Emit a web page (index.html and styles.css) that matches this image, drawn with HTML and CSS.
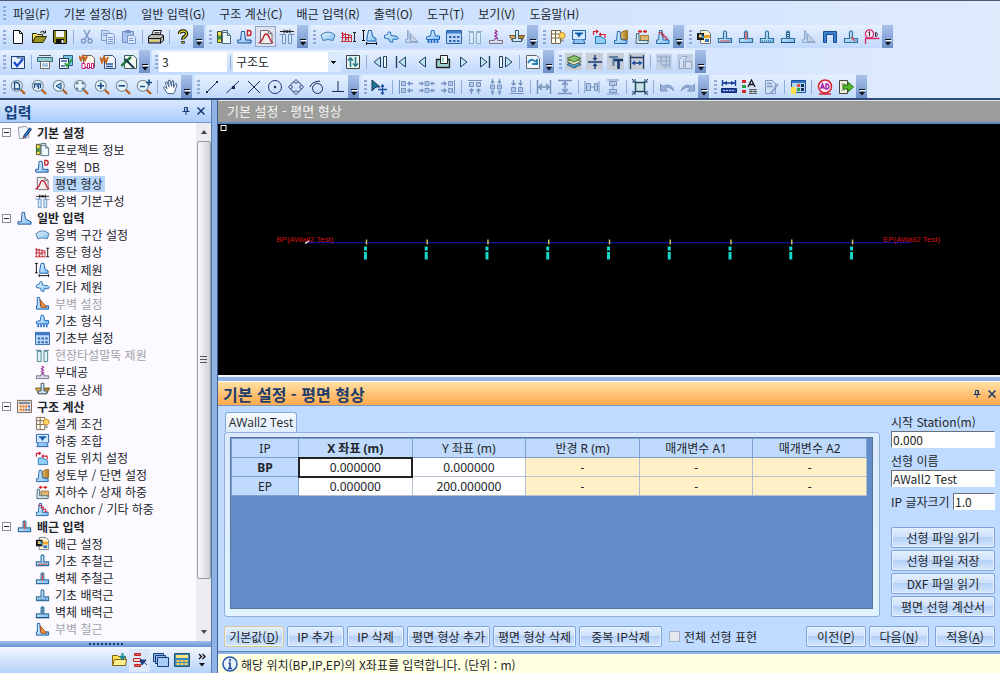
FILE: index.html
```html
<!DOCTYPE html>
<html lang="ko">
<head>
<meta charset="utf-8">
<title>기본 설정 - 평면 형상</title>
<link rel="stylesheet" href="styles.css">
</head>
<body>
<svg class="sprite" aria-hidden="true">
<defs>
<linearGradient id="gw" x1="0" y1="0" x2="1" y2="1"><stop offset="0" stop-color="#e6f6ff"/><stop offset="1" stop-color="#7fbdf0"/></linearGradient>
<linearGradient id="gs" x1="0" y1="0" x2="1" y2="0"><stop offset="0" stop-color="#e8c070"/><stop offset="1" stop-color="#a87820"/></linearGradient>
</defs>
<symbol id="new" viewBox="0 0 16 16"><path d="M3.500 1.500h6l3 3v10h-9z" fill="#fff" stroke="#111"/><path d="M9.500 1.500v3h3" fill="none" stroke="#111"/></symbol>
<symbol id="open" viewBox="0 0 16 16"><path d="M1.500 13.500v-9h4l1 1h5v2" fill="#ffe45c" stroke="#2b2a08"/><path d="M1.500 13.500l3-6h11l-3.500 6z" fill="#9a9420" stroke="#2b2a08"/><path d="M9 3.500q3-3 5 0M14.500 1.500v2.500h-3" fill="none" stroke="#222"/></symbol>
<symbol id="save" viewBox="0 0 16 16"><path d="M1.500 1.500h13v13h-12l-1-1z" fill="#8a8a20" stroke="#111"/><path d="M4 2h8v6H4z" fill="#f2f4f8"/><path d="M4 10h8v4.500H4z" fill="#111"/><path d="M9.500 11h2v3h-2z" fill="#fff"/></symbol>
<symbol id="cut" viewBox="0 0 16 16"><path d="M5 1l5 9M11 1l-5 9" stroke="#7d96c4" stroke-width="1.500"/><circle cx="4.500" cy="12" r="2" fill="none" stroke="#7d96c4" stroke-width="1.400"/><circle cx="11" cy="12" r="2" fill="none" stroke="#7d96c4" stroke-width="1.400"/></symbol>
<symbol id="copy" viewBox="0 0 16 16"><path d="M1.500 1.500h6l2 2v8h-8z" fill="#cfdff8" stroke="#7c9bd0"/><path d="M6.500 4.500h6l2 2v8h-8z" fill="#dce9fc" stroke="#7c9bd0"/><path d="M3 4.500h3M3 6.500h3M8 8.500h5M8 10.500h5M8 12.500h5" stroke="#7c9bd0"/></symbol>
<symbol id="paste" viewBox="0 0 16 16"><path d="M1.500 2.500h11v11h-11z" fill="#a9c2ea" stroke="#7391c8"/><path d="M4.500 1h5v3h-5z" fill="#7391c8"/><path d="M6.500 6.500h6l2 2v6h-8z" fill="#dce9fc" stroke="#7c9bd0"/><path d="M8 9.500h4M8 11.500h5" stroke="#7c9bd0"/></symbol>
<symbol id="print" viewBox="0 0 16 16"><path d="M5.500 1.500h8l-2 5h-8z" fill="#fff" stroke="#111"/><path d="M6.500 3.500h5M6 5h5" stroke="#555"/><path d="M.500 7.500l3-2h10l2 1v5l-3 2.500h-12z" fill="#b9b9b0" stroke="#111"/><path d="M.500 9.500h12v5M12.500 9.500l3-2.500" fill="none" stroke="#111"/><path d="M2 11.500h9" stroke="#e8d840"/></symbol>
<symbol id="help" viewBox="0 0 16 16"><path d="M4.500 5q0-3 3.500-3t3.500 3q0 1.500-2 2.800T8 10.500M8 12v2.500" fill="none" stroke="#111" stroke-width="3.400"/><path d="M4.500 5q0-3 3.500-3t3.500 3q0 1.500-2 2.800T8 10M8 12.500v1.500" fill="none" stroke="#d8cc20" stroke-width="1.400"/></symbol>
<symbol id="info" viewBox="0 0 16 16"><path d="M6.500 3.500h5l3 3v8h-8z" fill="#eef7fb" stroke="#506f80"/><path d="M11.500 3.500v3h3M6.500 3.500v-2h5v2" fill="none" stroke="#506f80"/><path d="M1.500 2.500h4v11h-4z" fill="#f2df50" stroke="#3e4a33"/><path d="M2 6.500h3v4H2z" fill="#3f9442"/></symbol>
<symbol id="db" viewBox="0 0 16 16"><path d="M4.500 2.500h3l1 8.500h5.500v3H.800v-3h2.700z" fill="url(#gw)" stroke="#1a539b"/><path d="M10.500 1.500h1.500q2 0 2 2.500t-2 2.500h-1.500z" fill="#fff" stroke="#c41c28" stroke-width="1.400"/></symbol>
<symbol id="foot" viewBox="0 0 16 16"><path d="M5.500 1.500h2.500l1 7 6 3v2.500H1v-2.500h3.500z" fill="url(#gw)" stroke="#1a539b"/></symbol>
<symbol id="plan" viewBox="0 0 16 16"><path d="M2.500 1.500h8l3.500 3v10H2.500z" fill="#f2efef" stroke="#6e6c74"/><path d="M10.500 1.500v3h3.500" fill="none" stroke="#6e6c74"/><path d="M.500 14q3-1 4.500-5t3-4q2 0 3.500 4t3.500 5" fill="none" stroke="#c01d30" stroke-width="1.300"/></symbol>
<symbol id="comp" viewBox="0 0 16 16"><path d="M3.500 5.500h3v9h-3zM9.500 5.500h3v9h-3z" fill="#d6e9fb" stroke="#6b93bf"/><path d="M.500 5.500h5M10.500 5.500h5" stroke="#6b93bf"/><path d="M1 2.500h14M5 .500v4M11 .500v4" stroke="#222"/><path d="M5 2.500l3-1.500v3zM11 2.500L8 1v3z" fill="#222"/></symbol>
<symbol id="fan" viewBox="0 0 16 16"><path d="M1 6q7-6 14 0l-2 5.500q-5-2-10 0z" fill="url(#gw)" stroke="#477bab"/></symbol>
<symbol id="prof" viewBox="0 0 16 16"><path d="M0 4.500l11 2M0 8.500h11M0 12.500h11M1.500 3v10M4.500 4v9M7.500 5v8M10.500 6v7M1 8l3-3M4 12l4-5" fill="none" stroke="#c5303a"/><path d="M13.500 3v10M12 3.500h3M12 12.500h3" stroke="#222"/></symbol>
<symbol id="sect" viewBox="0 0 16 16"><path d="M6.500 1.500h3l1 6 3.500 2v2.500h-9V9z" fill="url(#gw)" stroke="#1a5fb0"/><path d="M1.500 1v11M0 1.500h3M0 11.500h3M4 14.500h11M4.500 13v3M14.500 13v3" stroke="#111"/></symbol>
<symbol id="etc" viewBox="0 0 16 16"><path d="M1.500 6.500l3-1 1-2.500h2l.500 3.500 5 .500 2.500 2-1.500 1.500-4-.500-.500 3.500-3-1-.500-2.500-4.500-1z" fill="url(#gw)" stroke="#2a72b8"/></symbol>
<symbol id="butt" viewBox="0 0 16 16"><path d="M2.500 1.500h2.500l1 9h8.500v3.500h-13v-3.500h1z" fill="url(#gw)" stroke="#1a5fb0"/><path d="M5.500 4l7 8h-6z" fill="#f29b38" stroke="#9b4920"/></symbol>
<symbol id="buttg" viewBox="0 0 16 16"><path d="M3.500 1.500l1.500 1v7l9.500 4h-13v-3h2z" fill="#c3d6ef" stroke="#8fa8cc"/><path d="M6.500 4.500l7 8h-7z" fill="#c8d2de" stroke="#8fa8cc"/></symbol>
<symbol id="fdn" viewBox="0 0 16 16"><path d="M6.500 1.500h2.500l1.500 5.500h4v3.500H1.500V8l4-1z" fill="url(#gw)" stroke="#1a68c0"/><path d="M3.500 11v3M6.500 11v3M9.500 11v3M12.500 11v3" stroke="#1568c8" stroke-width="1.700"/></symbol>
<symbol id="fset" viewBox="0 0 16 16"><path d="M.500 1.500h15v13H.500z" fill="#bcd7fb" stroke="#2f67ac"/><path d="M1 2h14v2.500H1z" fill="#3c7cc9"/><path d="M3 8h2.500M7 8h2.500M11 8h2.500M3 12h2.500M7 12h2.500M11 12h2.500" stroke="#2f67ac" stroke-width="2"/></symbol>
<symbol id="pile" viewBox="0 0 16 16"><path d="M2.500 3.500h4v11h-4zM9.500 3.500h4v11h-4zM1 2.500h5.500v2M15 2.500H9.500" fill="#e2f3f8" stroke="#44808e"/></symbol>
<symbol id="acc" viewBox="0 0 16 16"><path d="M1.500 11.500h5v-2h3v2h5v3h-13z" fill="#dcd9e8" stroke="#797290"/><path d="M7 1l2 1.500-2 1.500 2 1.500-2 1.500 2 1.500-2 1.500" fill="none" stroke="#9c2f96" stroke-width="1.300"/></symbol>
<symbol id="soil" viewBox="0 0 16 16"><path d="M.500 6.500h15l-3 6h-9z" fill="url(#gs)" stroke="#76541a"/><path d="M6.500 1.500h3v8h3v3h-9v-3h3z" fill="#cde7f9" stroke="#3f5a70"/></symbol>
<symbol id="cond" viewBox="0 0 16 16"><path d="M1.500 1.500h9v13h-9zM1.500 5h9M1.500 9h9M5.500 1.500v13" fill="#fffaf0" stroke="#79654c"/><circle cx="12" cy="6.500" r="3" fill="#ffd964" stroke="#c38a1c"/><path d="M11 10.500h2.500v2H11z" fill="#8a8a8a"/></symbol>
<symbol id="load" viewBox="0 0 16 16"><path d="M1.500 1.500h13v9h-13z" fill="#d2e9ff" stroke="#285ea5"/><path d="M4 3.500h8V5h-1.500L8 8.500 5.500 5H4z" fill="#1459ad"/><path d="M3.500 10.500l-1.500 4h12l-1.500-4" fill="#8dc4f4" stroke="#285ea5"/></symbol>
<symbol id="chk" viewBox="0 0 16 16"><path d="M3.500 14.500v-7h5l5 3v4z" fill="#8fd0f4" stroke="#2d79b4"/><path d="M1.500 6V2.500h4M4 1l2 1.500L4 4M7.500 5.500h5.500V9M9 4L7.500 5.500 9 7" fill="none" stroke="#d3213b" stroke-width="1.200"/></symbol>
<symbol id="fill" viewBox="0 0 16 16"><path d="M14.500 1.500v9H8l-1-3q0-6 7.500-6z" fill="url(#gs)" stroke="#9b7020"/><path d="M4.500 2.500h2.500l1 8 6 1v3H1.500v-3h2z" fill="url(#gw)" stroke="#2268ac"/></symbol>
<symbol id="water" viewBox="0 0 16 16"><path d="M6.500 6.500h8v6h-8z" fill="#dcb66a" stroke="#9d7836"/><path d="M2.500 4.500h2.500v7h9v3h-12z" fill="#d9e7ec" stroke="#47697a"/><path d="M4 2.500h4M9 2.500h4M6 1v3M11 1v3" stroke="#d42020" stroke-width="1.300"/></symbol>
<symbol id="anch" viewBox="0 0 16 16"><path d="M4.500 1.500h2.500l1 9.500h6v3.500H1.500V11h2z" fill="url(#gw)" stroke="#2268ac"/><path d="M4 3l8 8M6 3l7 7" stroke="#c31d37" stroke-width="1.300" stroke-dasharray="2 1"/></symbol>
<symbol id="rset" viewBox="0 0 16 16"><path d="M4.500 1.500h7l3 3v10h-10z" fill="#fff3cf" stroke="#6c7c94"/><path d="M6 6h8v3H6z" fill="#f0a62c"/><path d="M1 4h7v7H1z" fill="#19191c"/><path d="M3 5.500h3v3H3z" fill="#f4d078"/><path d="M5 6l3 3" stroke="#48b7ef" stroke-width="1.500"/><path d="M9 10h4v3H9z" fill="#2e78c3"/></symbol>
<symbol id="wall" viewBox="0 0 16 16"><path d="M6.500 9.500V3q1.500-2 3 0v6.500h5v4h-13v-4z" fill="url(#gw)" stroke="#35729f" stroke-width="1.200"/></symbol>
<symbol id="w1" viewBox="0 0 16 16"><use href="#wall"/><path d="M3 12h10" stroke="#dd4a4a"/></symbol>
<symbol id="w2" viewBox="0 0 16 16"><use href="#wall"/><path d="M8 3v8" stroke="#dd4a4a" stroke-width="1.300"/></symbol>
<symbol id="w3" viewBox="0 0 16 16"><use href="#wall"/><path d="M3 12h10" stroke="#174c80" stroke-dasharray="1 1"/></symbol>
<symbol id="w4" viewBox="0 0 16 16"><use href="#wall"/><path d="M8 3v7" stroke="#0f3863" stroke-width="1.500" stroke-dasharray="1 1"/><path d="M1 13.500h14" stroke="#174c80"/></symbol>
<symbol id="w5" viewBox="0 0 16 16"><use href="#wall"/><path d="M8 8l4 4" stroke="#dd4a4a" stroke-width="1.500"/></symbol>
<symbol id="bstop" viewBox="0 0 16 16"><path d="M1.500 13.500h3v-8h7v8h3v-11h-13z" fill="#3d7fc4" stroke="#164f94"/></symbol>
<symbol id="oned" viewBox="0 0 16 16"><circle cx="5.500" cy="5" r="4.200" fill="#fbe3f0" stroke="#d8286c" stroke-width="1.200"/><path d="M4.500 3.500l1-1v5M11.500 3.500v4h1q2-2 0-4z" fill="none" stroke="#333"/><path d="M1.500 15V9.500h14" fill="none" stroke="#d8286c" stroke-width="1.300"/></symbol>
<symbol id="note" viewBox="0 0 16 16"><path d="M1.500 2.500l8-1 3 3v9l-10 1z" fill="#f4f8ff" stroke="#8590a8"/><path d="M13.500 3l2 1.500-6 8-3 1.500 1-3z" fill="#2f77c8" stroke="#183765"/><path d="M6 14l1-2 1.500 1z" fill="#cc4322"/></symbol>
<symbol id="calc" viewBox="0 0 16 16"><path d="M.500 1.500h15v13H.500z" fill="#f7e5cf" stroke="#72645b"/><path d="M2 3h12v2.500H2z" fill="#7c8aa0"/><path d="M3 8h2M6 8h2M9 8h2M3 11.500h2M6 11.500h2" stroke="#df6d22" stroke-width="2"/><path d="M12 8h2M9 11.500h2M12 11.500h2" stroke="#2f6ec5" stroke-width="2"/></symbol>
<symbol id="check" viewBox="0 0 16 16"><path d="M1.500 2.500h13v12h-13z" fill="#e8f1ff" stroke="#1f3d79"/><path d="M1.500 2.500h5l1 1.500h7" fill="none" stroke="#1f3d79"/><path d="M4 8l3 4 6-7" fill="none" stroke="#144bd0" stroke-width="2.200"/></symbol>
<symbol id="plot" viewBox="0 0 16 16"><path d="M.500 3.500h15v4H.500z" fill="#8fd0d8" stroke="#336670"/><path d="M3.500 7.500h9v7h-9z" fill="#fff" stroke="#666"/><path d="M5 10h6M5 12h6" stroke="#4b91ca"/><path d="M2 1.500h12" stroke="#555"/></symbol>
<symbol id="rep" viewBox="0 0 16 16"><path d="M5.500 1.500h9v10h-9z" fill="#79c8e8" stroke="#2f6080"/><path d="M1.500 4.500h9v10h-9z" fill="#f5fbff" stroke="#335"/><path d="M3 7h6M3 12h4" stroke="#2b60b0" stroke-width="1.500"/><path d="M7 9l2 3 5-7" fill="none" stroke="#2b9b3c" stroke-width="2"/></symbol>
<symbol id="wrd" viewBox="0 0 16 16"><path d="M4.500 1.500h8l3 3v10h-11z" fill="#f2f6ff" stroke="#3d4e78"/><path d="M0 3l2 5 2-5 2 5 2-5" fill="none" stroke="#c4641c" stroke-width="2"/><path d="M6 10h7M6 12.500h7" stroke="#2b56a0" stroke-width="1.500"/></symbol>
<symbol id="xls" viewBox="0 0 16 16"><path d="M3.500 1.500h9l3 3v10h-12z" fill="#f6fcf4" stroke="#3a5a4c"/><path d="M0 12l10-9" stroke="#1f7a3a" stroke-width="2.400"/><path d="M4 5l9 9" stroke="#1b3a50" stroke-width="2"/></symbol>
<symbol id="mag" viewBox="0 0 16 16"><path d="M10.500 10.500l4.500 4.500" stroke="#b5662b" stroke-width="2.400"/><circle cx="6.800" cy="6.800" r="5.500" fill="#e5f4fa" stroke="#7d909c" stroke-width="1.200"/></symbol>
<symbol id="z1" viewBox="0 0 16 16"><use href="#mag"/><path d="M4.500 3.500h3l2 2v4.500h-5z" fill="none" stroke="#174a86" stroke-width="1.300"/></symbol>
<symbol id="z2" viewBox="0 0 16 16"><use href="#mag"/><path d="M3.500 9V5h6v4M5.500 7h2v3" fill="none" stroke="#174a86" stroke-width="1.300"/></symbol>
<symbol id="z3" viewBox="0 0 16 16"><use href="#mag"/><path d="M9 4v6L4 7z" fill="#8fc1d8" stroke="#174a86"/></symbol>
<symbol id="z4" viewBox="0 0 16 16"><use href="#mag"/><path d="M4 5.500V4h1.500M8.500 4H10v1.500M4 8.500V10h1.500M8.500 10H10V8.500" fill="none" stroke="#174a86" stroke-width="1.200"/></symbol>
<symbol id="z5" viewBox="0 0 16 16"><use href="#mag"/><path d="M3.500 6.800h6.600M6.800 3.500v6.600" stroke="#174a86" stroke-width="1.600"/></symbol>
<symbol id="z6" viewBox="0 0 16 16"><use href="#mag"/><path d="M3.500 6.800h6.600" stroke="#174a86" stroke-width="1.600"/></symbol>
<symbol id="z7" viewBox="0 0 16 16"><use href="#mag"/><path d="M4 7.500h5M10 3.500h6M13 .500v6" stroke="#174a86" stroke-width="1.600"/></symbol>
<symbol id="hand" viewBox="0 0 16 16"><path d="M4.500 14.500l-4-6 1.500-.700 2 2-1.500-6.500 1.500-.500 2 5-.500-6.500h1.500l1.500 6 .500-5.500 1.500.200v6.500l2-4 1.500.700-2 7-1.500 2.500z" fill="#fff" stroke="#44668c"/></symbol>
<symbol id="l1" viewBox="0 0 16 16"><path d="M3 13L13 3" stroke="#182a55"/><path d="M2 12h2v2H2zM12 2h2v2h-2z" fill="#182a55"/></symbol>
<symbol id="l2" viewBox="0 0 16 16"><path d="M1.500 14L14 2" stroke="#182a55"/><path d="M7 7h3v3H7z" fill="#182a55"/></symbol>
<symbol id="l3" viewBox="0 0 16 16"><path d="M2 14L14 2M2 2l12 12" stroke="#182a55"/></symbol>
<symbol id="l4" viewBox="0 0 16 16"><circle cx="8" cy="8" r="6.500" fill="none" stroke="#1d3878"/><circle cx="8" cy="8" r="1.200" fill="#182a55"/></symbol>
<symbol id="l5" viewBox="0 0 16 16"><circle cx="8" cy="8" r="5.500" fill="none" stroke="#1d3878"/><path d="M8 .500L10 2.500 8 4.500 6 2.500zM8 11.500l2 2-2 2-2-2zM2.500 6l2 2-2 2-2-2zM13.500 6l2 2-2 2-2-2z" fill="#dcebff" stroke="#1d3878"/></symbol>
<symbol id="l6" viewBox="0 0 16 16"><circle cx="8.500" cy="9.500" r="5" fill="none" stroke="#182a55"/><path d="M1 8q1-5 10-6" fill="none" stroke="#182a55"/></symbol>
<symbol id="l7" viewBox="0 0 16 16"><path d="M8 2v10M2 12.500h12" stroke="#182a55"/></symbol>
<symbol id="fit" viewBox="0 0 16 16"><path d="M1.500 1.500h13v13h-13z" fill="#e6f5f2" stroke="#444"/><path d="M5.500 13V4M3 6.500L5.500 4 8 6.500M10.500 3v9M8 9.500l2.500 2.500L13 9.500" fill="none" stroke="#287c86" stroke-width="1.600"/></symbol>
<symbol id="p1" viewBox="0 0 16 16"><path d="M8.500 3v10L2 8z" fill="#bde4f2" stroke="#203f5c"/><path d="M11.500 2.500h3v11h-3z" fill="#eefaff" stroke="#203f5c"/></symbol>
<symbol id="p2" viewBox="0 0 16 16"><path d="M12.500 3v10L6 8z" fill="#bde4f2" stroke="#203f5c"/><path d="M3.500 2v12" stroke="#203f5c" stroke-width="1.400"/></symbol>
<symbol id="p3" viewBox="0 0 16 16"><path d="M11.500 3v10L5 8z" fill="#bde4f2" stroke="#203f5c"/></symbol>
<symbol id="p4" viewBox="0 0 16 16"><path d="M1.500 5.500h13v8h-13z" fill="#9ed2cf" stroke="#222" stroke-width="1.300"/><path d="M5.500 1.500h7v8h-7z" fill="#fff" stroke="#222"/><path d="M8 3v5" stroke="#9ed2cf" stroke-width="2"/></symbol>
<symbol id="p5" viewBox="0 0 16 16"><path d="M4.500 3v10L11 8z" fill="#bde4f2" stroke="#203f5c"/></symbol>
<symbol id="p6" viewBox="0 0 16 16"><path d="M3.500 3v10L10 8z" fill="#bde4f2" stroke="#203f5c"/><path d="M12.500 2v12" stroke="#203f5c" stroke-width="1.400"/></symbol>
<symbol id="p7" viewBox="0 0 16 16"><path d="M7.500 3v10L14 8z" fill="#bde4f2" stroke="#203f5c"/><path d="M1.500 2.500h3v11h-3z" fill="#eefaff" stroke="#203f5c"/></symbol>
<symbol id="redo2" viewBox="0 0 16 16"><path d="M1.500 1.500h10l3 3v10h-13z" fill="#eef6fb" stroke="#666"/><path d="M3 9q3-6 8-1M12 5v5H7" fill="none" stroke="#2a85b8" stroke-width="2"/></symbol>
<symbol id="lay" viewBox="0 0 16 16"><path d="M1 10.500l7 3.500 7-3.500-3-1.500H4z" fill="#4fa0d0" stroke="#2a5a7a"/><path d="M1 7.500L8 11l7-3.500L12 6H4z" fill="#e7e8c8" stroke="#5c6c4c"/><path d="M1 4.500L8 8l7-3.500L8 1.500z" fill="#8cc46c" stroke="#3e6e34"/></symbol>
<symbol id="mid" viewBox="0 0 16 16"><path d="M1 8h14M8 1v4M8 15v-4" stroke="#1c3c78" stroke-width="1.500"/><path d="M5.500 4h5L8 7zM5.500 12h5L8 9z" fill="#1c3c78"/></symbol>
<symbol id="tt" viewBox="0 0 16 16"><path d="M1 3h9M5.500 3v9" stroke="#5c80a8" stroke-width="2.200"/><path d="M6 6h9M10.500 6v9" stroke="#173b6c" stroke-width="2.600"/></symbol>
<symbol id="dim" viewBox="0 0 16 16"><path d="M1.500 1v14M14.500 1v14M1.500 3.500h13M4 9h8" stroke="#26426c" stroke-width="1.300"/><path d="M2.500 9L6 6.500v5zM13.500 9L10 6.500v5z" fill="#1c50b0"/></symbol>
<symbol id="hatch" viewBox="0 0 16 16"><path d="M0 0h16v16H0z" fill="#c2d0e4"/><path d="M1 3h14M1 7h14M6 11h8M5 1v8l4 5M10 1v13M13.500 3v11" fill="none" stroke="#8ea6ca"/></symbol>
<symbol id="shp" viewBox="0 0 16 16"><path d="M0 0h16v16H0z" fill="#c2d0e4"/><path d="M2.500 14.500v-9l3-3h5l-4 4v8zM8.500 7.500h6v7h-6z" fill="#d6e2f4" stroke="#8ea6ca"/></symbol>
<symbol id="sel" viewBox="0 0 16 16"><path d="M1 1l8 7H5l-4 4z" fill="#167c98" stroke="#1b3450"/><path d="M11.500 6v9M7 10.500h9M10 7.500l1.500-1.500L13 7.500M10 13.500l1.500 1.500 1.500-1.500" fill="none" stroke="#1e51a3" stroke-width="1.300"/></symbol>
<symbol id="al" viewBox="0 0 16 16"><path d="M1.500 1v14" stroke="#7893bf"/><path d="M3.500 2.500h4v4h-4zM3.500 9.500h4v4h-4z" fill="#b3c8ea" stroke="#7893bf"/><path d="M15 4.500h-5M15 11.500h-5M12 2.500l-2 2 2 2M12 9.500l-2 2 2 2" fill="none" stroke="#7893bf" stroke-width="1.300"/></symbol>
<symbol id="ac" viewBox="0 0 16 16"><path d="M6 2.500h4v4H6zM6 9.500h4v4H6z" fill="#b3c8ea" stroke="#7893bf"/><path d="M0 4.500h4M16 4.500h-4M0 11.500h4M16 11.500h-4M2.500 3L4 4.500 2.500 6M13.500 3L12 4.500 13.500 6M2.500 10L4 11.500 2.500 13M13.500 10L12 11.500l1.500 1.500" fill="none" stroke="#7893bf" stroke-width="1.300"/></symbol>
<symbol id="dd" viewBox="0 0 16 16"><path d="M1.500 1v14M14.500 1v14M3 8h10M6 5L3 8l3 3M10 5l3 3-3 3" fill="none" stroke="#7893bf" stroke-width="1.500"/></symbol>
<symbol id="dc" viewBox="0 0 16 16"><path d="M2.500 4.500h4v7h-4zM10.500 4.500h3v7h-3z" fill="#b3c8ea" stroke="#7893bf"/><path d="M7 8h3M1 2v12M15 2v12" stroke="#7893bf"/></symbol>
<symbol id="grp" viewBox="0 0 16 16"><path d="M3.500 3.500h9v9h-9z" fill="#c9e4e4" stroke="#1d4d5c" stroke-width="1.500"/><path d="M0 0l3 3M16 0l-3 3M0 16l3-3M16 16l-3-3M0 3h3V0M16 3h-3V0M0 13h3v3M16 13h-3v3" fill="none" stroke="#223a60"/></symbol>
<symbol id="undo" viewBox="0 0 16 16"><path d="M1.500 5v7h7l-2.500-2.500q4-3 9 2.500Q12 3 4 7.500z" fill="#9bb3da" stroke="#7893bf"/></symbol>
<symbol id="ruler" viewBox="0 0 16 16"><path d="M1.500 1v6M14.500 1v6M2 4h12" stroke="#1c3e9b" stroke-width="1.400"/><path d="M2 4l4-2v4zM14 4l-4-2v4z" fill="#1c3e9b"/><path d="M.500 9.500h15v4H.500z" fill="#2346a0" stroke="#112c70"/><path d="M2 11.500h12" stroke="#b8ccf4" stroke-dasharray="2 1"/></symbol>
<symbol id="prop" viewBox="0 0 16 16"><path d="M0 1h4v3H0zM0 11h4v3H0z" fill="#d02c2c"/><path d="M0 6h4v3H0z" fill="#2c9c3c"/><path d="M6 8l3.500-7L13 8M7.500 5.500h4" fill="none" stroke="#111" stroke-width="1.300"/><path d="M7 10.500h8M7 12.500h8M7 14.500h8M9 10v5M13 10v5" stroke="#666"/></symbol>
<symbol id="edit" viewBox="0 0 16 16"><path d="M2.500 1.500h7l3 3v10h-10z" fill="#cfdff5" stroke="#8099c4"/><path d="M15 5l-7 9M4 4.500h5M4 7.500h6" stroke="#8099c4" stroke-width="1.600"/></symbol>
<symbol id="pal" viewBox="0 0 16 16"><path d="M1.500 1.500h14v12h-14z" fill="#b9d8f6" stroke="#1a4f97"/><path d="M2 2h13v2H2z" fill="#3474c4"/><path d="M7 5h3v3H7z" fill="#e05040"/><path d="M11 5h3v3h-3zM11 9h3v3h-3z" fill="#1a2f57"/><path d="M7 9h3v3H7z" fill="#2c9c3c"/><path d="M1 8h5v7H1z" fill="#ffdf50"/></symbol>
<symbol id="ad" viewBox="0 0 16 16"><circle cx="8" cy="7.500" r="6.500" fill="#ffe8f0" stroke="#d42033" stroke-width="1.500"/><path d="M3.500 10l2-5 2 5M4.500 8.500h2M9 5v5h1.500q3-2.500 0-5z" fill="none" stroke="#a520a8" stroke-width="1.400"/><path d="M2 15h12" stroke="#d42033" stroke-width="1.500"/></symbol>
<symbol id="exit" viewBox="0 0 16 16"><path d="M1.500 1.500h8v13h-8z" fill="#f0f5da" stroke="#444"/><path d="M3 5h4M3 11h4" stroke="#888"/><path d="M5 6h5V3l5.500 5-5.500 5v-3H5z" fill="#55b82c" stroke="#226f18"/></symbol>
<symbol id="fold" viewBox="0 0 16 16"><path d="M1.500 13.500v-10h5l1 1h7v9z" fill="#ffdf50" stroke="#80641c"/><path d="M1.500 13.500l2-6h12l-1 6z" fill="#ffef8d" stroke="#80641c"/><path d="M11.500 1v5M9 4l2.500 3L14 4" fill="none" stroke="#16889c" stroke-width="1.800"/></symbol>
<symbol id="list" viewBox="0 0 16 16"><path d="M2.500 1.500h6v2h-6zM2.500 12.500h6v2h-6z" fill="#e8605c" stroke="#b82420"/><path d="M1.500 6.500h7v3h-7z" fill="#f8d8d4" stroke="#b82420"/><path d="M15 13l-4-4M8 8h6l-4 5z" fill="#1f3e7c" stroke="#1f3e7c"/></symbol>
<symbol id="wins" viewBox="0 0 16 16"><path d="M.500 1.500h10v8H.500z" fill="#91b9ec" stroke="#173e77"/><path d="M2.500 3.500h10v8h-10z" fill="#91b9ec" stroke="#173e77"/><path d="M4.500 5.500h11v9h-11z" fill="#a9cdf6" stroke="#173e77"/></symbol>
<symbol id="cal2" viewBox="0 0 16 16"><path d="M.500 1.500h15v13H.500z" fill="#3b8bbd" stroke="#28516d"/><path d="M2 3h12v3H2z" fill="#ffe27d"/><path d="M2.500 9h11M2.500 12h11" stroke="#ffd04f" stroke-width="2" stroke-dasharray="3 1"/></symbol>
<symbol id="pin" viewBox="0 0 8 8"><path d="M2.500 4.500v-4h3v4M.500 4.500h7M4 5v3" fill="none" stroke="#173a75"/><path d="M5 1v3" stroke="#173a75"/></symbol>
<symbol id="x" viewBox="0 0 8 8"><path d="M.500.500l7 7M7.500.500l-7 7" stroke="#173a75" stroke-width="1.500"/></symbol>
<symbol id="more" viewBox="0 0 8 8"><path d="M2 2.500h6" stroke="#fff"/><path d="M1 1.500h6" stroke="#111"/><path d="M1 4h6L4 7.500z" fill="#111"/></symbol>
</svg>

<div class="app">
<nav class="menu" aria-label="메뉴">
<span class="grip"></span>
<button>파일(F)</button><button>기본 설정(B)</button><button>일반 입력(G)</button><button>구조 계산(C)</button><button>배근 입력(R)</button><button>출력(O)</button><button>도구(T)</button><button>보기(V)</button><button>도움말(H)</button>
</nav>

<div class="bars">
<div class="row">
<div class="bar"><span class="grip"></span>
<button aria-label="새 파일"><svg><use href="#new"/></svg></button><button aria-label="열기"><svg><use href="#open"/></svg></button><button aria-label="저장"><svg><use href="#save"/></svg></button><i class="sep"></i><button aria-label="잘라내기"><svg><use href="#cut"/></svg></button><button aria-label="복사"><svg><use href="#copy"/></svg></button><button aria-label="붙여넣기"><svg><use href="#paste"/></svg></button><i class="sep"></i><button aria-label="인쇄"><svg><use href="#print"/></svg></button><i class="sep"></i><button aria-label="도움말"><svg><use href="#help"/></svg></button><button class="more" aria-label="더 보기"><svg><use href="#more"/></svg></button></div>
<div class="bar"><span class="grip"></span>
<button aria-label="프로젝트 정보"><svg><use href="#info"/></svg></button><button aria-label="옹벽 DB"><svg><use href="#db"/></svg></button><button class="on" aria-label="평면 형상"><svg><use href="#plan"/></svg></button><button aria-label="옹벽 기본구성"><svg><use href="#comp"/></svg></button><button class="more" aria-label="더 보기"><svg><use href="#more"/></svg></button></div>
<div class="bar"><span class="grip"></span>
<button aria-label="옹벽 구간 설정"><svg><use href="#fan"/></svg></button><button aria-label="종단 형상"><svg><use href="#prof"/></svg></button><button aria-label="단면 제원"><svg><use href="#sect"/></svg></button><button aria-label="기타 제원"><svg><use href="#etc"/></svg></button><button aria-label="부벽 설정"><svg><use href="#buttg"/></svg></button><button aria-label="기초 형식"><svg><use href="#fdn"/></svg></button><button aria-label="기초부 설정"><svg><use href="#fset"/></svg></button><button class="off" aria-label="말뚝 제원"><svg><use href="#pile"/></svg></button><button aria-label="부대공"><svg><use href="#acc"/></svg></button><button aria-label="토공 상세"><svg><use href="#soil"/></svg></button><button class="more" aria-label="더 보기"><svg><use href="#more"/></svg></button></div>
<div class="bar"><span class="grip"></span>
<button aria-label="설계 조건"><svg><use href="#cond"/></svg></button><button aria-label="하중 조합"><svg><use href="#load"/></svg></button><button aria-label="검토 위치 설정"><svg><use href="#chk"/></svg></button><button aria-label="성토부"><svg><use href="#fill"/></svg></button><button aria-label="지하수"><svg><use href="#water"/></svg></button><button aria-label="Anchor"><svg><use href="#anch"/></svg></button><button class="more" aria-label="더 보기"><svg><use href="#more"/></svg></button></div>
<div class="bar"><span class="grip"></span>
<button aria-label="배근 설정"><svg><use href="#rset"/></svg></button><button aria-label="기초 주철근"><svg><use href="#w1"/></svg></button><button aria-label="벽체 주철근"><svg><use href="#w2"/></svg></button><button aria-label="기초 배력근"><svg><use href="#w3"/></svg></button><button aria-label="벽체 배력근"><svg><use href="#w4"/></svg></button><button aria-label="부벽 철근"><svg><use href="#buttg"/></svg></button><button aria-label="전단 철근"><svg><use href="#bstop"/></svg></button><button aria-label="보강 철근"><svg><use href="#w5"/></svg></button><button aria-label="철근 기호"><svg><use href="#oned"/></svg></button><button class="more" aria-label="더 보기"><svg><use href="#more"/></svg></button></div>
</div>

<div class="row">
<div class="bar"><span class="grip"></span>
<button aria-label="확인"><svg><use href="#check"/></svg></button><i class="sep"></i><button aria-label="출력"><svg><use href="#plot"/></svg></button><button aria-label="보고서"><svg><use href="#rep"/></svg></button><button aria-label="수량"><svg viewBox="0 0 16 16"><path d="M4.500 1.500h8l3 3v9h-11z" fill="#fff8e8" stroke="#665c50"/><path d="M0 2l2 4 2-4 2 4 2-4" fill="none" stroke="#c4641c" stroke-width="2"/><path d="M3 9.500h3v5H3zM8.500 9.500h2v5h-2zM12.500 9.500h2v5h-2zM6.500 14h1" fill="#fff" stroke="#d01c84"/></svg></button><button aria-label="문서"><svg><use href="#wrd"/></svg></button><button aria-label="표 계산"><svg><use href="#xls"/></svg></button><button class="more" aria-label="더 보기"><svg><use href="#more"/></svg></button></div>
<div class="bar"><span class="grip"></span>
<input class="num" type="text" value="3" aria-label="번호"><i class="sep"></i>
<select class="combo" aria-label="도면"><option>구조도</option></select>
<button aria-label="맞춤"><svg><use href="#fit"/></svg></button><i class="sep"></i><button aria-label="처음 묶음"><svg><use href="#p1"/></svg></button><button aria-label="처음"><svg><use href="#p2"/></svg></button><button aria-label="이전"><svg><use href="#p3"/></svg></button><button aria-label="도면 목록"><svg><use href="#p4"/></svg></button><button aria-label="다음"><svg><use href="#p5"/></svg></button><button aria-label="마지막"><svg><use href="#p6"/></svg></button><button aria-label="마지막 묶음"><svg><use href="#p7"/></svg></button><i class="sep"></i><button aria-label="갱신"><svg><use href="#redo2"/></svg></button><button class="more" aria-label="더 보기"><svg><use href="#more"/></svg></button></div>
<div class="bar"><span class="grip"></span>
<button class="g" aria-label="레이어"><svg><use href="#lay"/></svg></button><button class="g" aria-label="간격"><svg><use href="#mid"/></svg></button><button class="g" aria-label="글꼴"><svg><use href="#tt"/></svg></button><button class="g" aria-label="치수"><svg><use href="#dim"/></svg></button><i class="sep"></i><button aria-label="해치"><svg><use href="#hatch"/></svg></button><button aria-label="도형"><svg><use href="#shp"/></svg></button><button class="more" aria-label="더 보기"><svg><use href="#more"/></svg></button></div>
</div>

<div class="row">
<div class="bar"><span class="grip"></span>
<button aria-label="창 확대"><svg><use href="#z1"/></svg></button><button aria-label="영역 확대"><svg><use href="#z2"/></svg></button><button aria-label="이전 화면"><svg><use href="#z3"/></svg></button><button aria-label="전체 화면"><svg><use href="#z4"/></svg></button><button aria-label="확대"><svg><use href="#z5"/></svg></button><button aria-label="축소"><svg><use href="#z6"/></svg></button><button aria-label="동적 확대"><svg><use href="#z7"/></svg></button><i class="sep"></i><button aria-label="이동"><svg><use href="#hand"/></svg></button><button class="more" aria-label="더 보기"><svg><use href="#more"/></svg></button></div>
<div class="bar"><span class="grip"></span>
<button aria-label="끝점"><svg><use href="#l1"/></svg></button><button aria-label="중간점"><svg><use href="#l2"/></svg></button><button aria-label="교차점"><svg><use href="#l3"/></svg></button><button aria-label="중심점"><svg><use href="#l4"/></svg></button><button aria-label="사분점"><svg><use href="#l5"/></svg></button><button aria-label="접점"><svg><use href="#l6"/></svg></button><button aria-label="수직점"><svg><use href="#l7"/></svg></button><button class="more" aria-label="더 보기"><svg><use href="#more"/></svg></button></div>
<div class="bar"><span class="grip"></span>
<button aria-label="선택"><svg><use href="#sel"/></svg></button><i class="sep"></i><button aria-label="왼쪽 맞춤"><svg><use href="#al"/></svg></button><button aria-label="가운데 맞춤"><svg><use href="#ac"/></svg></button><button class="r180" aria-label="오른쪽 맞춤"><svg><use href="#al"/></svg></button><i class="sep"></i><button class="r90" aria-label="위 맞춤"><svg><use href="#al"/></svg></button><button class="r90" aria-label="중간 맞춤"><svg><use href="#ac"/></svg></button><button class="r270" aria-label="아래 맞춤"><svg><use href="#al"/></svg></button><i class="sep"></i><button aria-label="너비 맞춤"><svg><use href="#dd"/></svg></button><button class="r90" aria-label="높이 맞춤"><svg><use href="#dd"/></svg></button><i class="sep"></i><button aria-label="가로 간격"><svg><use href="#dc"/></svg></button><button class="r90" aria-label="세로 간격"><svg><use href="#dc"/></svg></button><i class="sep"></i><button aria-label="크기 맞춤"><svg><use href="#grp"/></svg></button><i class="sep"></i><button aria-label="실행 취소"><svg><use href="#undo"/></svg></button><button class="flip" aria-label="다시 실행"><svg><use href="#undo"/></svg></button><button class="more" aria-label="더 보기"><svg><use href="#more"/></svg></button></div>
<div class="bar"><span class="grip"></span>
<button aria-label="치수 설정"><svg><use href="#ruler"/></svg></button><button aria-label="속성"><svg><use href="#prop"/></svg></button><button aria-label="편집"><svg><use href="#edit"/></svg></button><i class="sep"></i><button aria-label="화면 설정"><svg><use href="#pal"/></svg></button><i class="sep"></i><button aria-label="AD"><svg><use href="#ad"/></svg></button><button aria-label="내보내기"><svg><use href="#exit"/></svg></button><button class="more" aria-label="더 보기"><svg><use href="#more"/></svg></button></div>
</div>
</div>

<div class="work">
<aside class="side">
<header class="side-head"><h2>입력</h2><button aria-label="고정"><svg><use href="#pin"/></svg></button><button aria-label="닫기"><svg><use href="#x"/></svg></button></header>
<div class="side-body">
<ul class="tree">
<li class="top"><i class="box"></i><svg><use href="#note"/></svg><span>기본 설정</span></li>
<li><svg><use href="#info"/></svg><span>프로젝트 정보</span></li>
<li><svg><use href="#db"/></svg><span>옹벽&nbsp; DB</span></li>
<li class="sel"><svg><use href="#plan"/></svg><span>평면 형상</span></li>
<li><svg><use href="#comp"/></svg><span>옹벽 기본구성</span></li>
<li class="top"><i class="box"></i><svg><use href="#foot"/></svg><span>일반 입력</span></li>
<li><svg><use href="#fan"/></svg><span>옹벽 구간 설정</span></li>
<li><svg><use href="#prof"/></svg><span>종단 형상</span></li>
<li><svg><use href="#sect"/></svg><span>단면 제원</span></li>
<li><svg><use href="#etc"/></svg><span>기타 제원</span></li>
<li class="dis"><svg><use href="#butt"/></svg><span>부벽 설정</span></li>
<li><svg><use href="#fdn"/></svg><span>기초 형식</span></li>
<li><svg><use href="#fset"/></svg><span>기초부 설정</span></li>
<li class="dis"><svg><use href="#pile"/></svg><span>현장타설말뚝 제원</span></li>
<li><svg><use href="#acc"/></svg><span>부대공</span></li>
<li><svg><use href="#soil"/></svg><span>토공 상세</span></li>
<li class="top"><i class="box"></i><svg><use href="#calc"/></svg><span>구조 계산</span></li>
<li><svg><use href="#cond"/></svg><span>설계 조건</span></li>
<li><svg><use href="#load"/></svg><span>하중 조합</span></li>
<li><svg><use href="#chk"/></svg><span>검토 위치 설정</span></li>
<li><svg><use href="#fill"/></svg><span>성토부 / 단면 설정</span></li>
<li><svg><use href="#water"/></svg><span>지하수 / 상재 하중</span></li>
<li><svg><use href="#anch"/></svg><span>Anchor / 기타 하중</span></li>
<li class="top"><i class="box"></i><svg><use href="#w2"/></svg><span>배근 입력</span></li>
<li><svg><use href="#rset"/></svg><span>배근 설정</span></li>
<li><svg><use href="#w1"/></svg><span>기초 주철근</span></li>
<li><svg><use href="#w2"/></svg><span>벽체 주철근</span></li>
<li><svg><use href="#w3"/></svg><span>기초 배력근</span></li>
<li><svg><use href="#w4"/></svg><span>벽체 배력근</span></li>
<li class="dis"><svg><use href="#butt"/></svg><span>부벽 철근</span></li>
</ul>
<div class="scroll" aria-hidden="true"><i class="up"></i><div class="thumb"><i></i></div><i class="down"></i></div>
</div>
<div class="split"><i></i></div>
<footer class="side-foot"><button aria-label="불러오기"><svg><use href="#fold"/></svg></button><button class="lit" aria-label="목록"><svg><use href="#list"/></svg></button><button aria-label="창"><svg><use href="#wins"/></svg></button><button aria-label="계산"><svg><use href="#cal2"/></svg></button><button class="chev" aria-label="더 보기"><svg viewBox="0 0 8 14"><path d="M1 1l2.500 2.500L1 6M4.500 1L7 3.500 4.500 6" fill="none" stroke="#111" stroke-width="1.300"/><path d="M1 10h6l-3 3.500z" fill="#111"/></svg></button></footer>
</aside>

<main class="main">
<h1 class="view-head">기본 설정 - 평면 형상</h1>
<div class="view">
<svg viewBox="0 0 782 252" preserveAspectRatio="xMidYMid meet" role="img" aria-label="평면 선형">
<defs><g id="st"><path d="M.500-3v5" stroke="#c8c050" stroke-width="1.500"/><path d="M-.500 4v4M-.500 9.500v7.500" stroke="#14d8cc" stroke-width="3"/></g></defs>
<rect x="1.500" y="1.500" width="5" height="5" fill="none" stroke="#fff"/>
<path d="M88 119h606" stroke="#14149c" stroke-width="1.300"/>
<path d="M86 120l4-3" stroke="#fff" stroke-width="1.500"/>
<use href="#st" x="147" y="119"/><use href="#st" x="208" y="119"/><use href="#st" x="269" y="119"/><use href="#st" x="330" y="119"/><use href="#st" x="391" y="119"/><use href="#st" x="452" y="119"/><use href="#st" x="513" y="119"/><use href="#st" x="574" y="119"/><use href="#st" x="635" y="119"/>
<text class="cad" x="57" y="118">BP(AWall2 Test)</text><text class="cad" x="666" y="118">EP(AWall2 Test)</text>
</svg>
</div>

<section class="dock">
<header class="dock-head"><h2>기본 설정 - 평면 형상</h2><button aria-label="고정"><svg><use href="#pin"/></svg></button><button aria-label="닫기"><svg><use href="#x"/></svg></button></header>
<div class="dock-body">
<div class="upper">
<div class="tabs">
<button class="tab">AWall2 Test</button>
<div class="frame"><div class="sheet">
<table>
<colgroup><col class="c0"><col><col><col><col><col></colgroup>
<thead><tr><th>IP</th><th class="b">X 좌표 (m)</th><th>Y 좌표 (m)</th><th>반경 R (m)</th><th>매개변수 A1</th><th>매개변수 A2</th></tr></thead>
<tbody>
<tr><th class="b">BP</th><td class="cur">0.000000</td><td>0.000000</td><td class="na">-</td><td class="na">-</td><td class="na">-</td></tr>
<tr><th>EP</th><td>0.000000</td><td>200.000000</td><td class="na">-</td><td class="na">-</td><td class="na">-</td></tr>
</tbody>
</table>
</div></div>
</div>
<div class="opts">
<label for="st0">시작 Station(m)</label><input id="st0" type="text" value="0.000">
<label for="nm">선형 이름</label><input id="nm" type="text" value="AWall2 Test">
<div class="inl"><label for="fs">IP 글자크기</label><input id="fs" type="text" value="1.0"></div>
<div class="stack"><button class="btn">선형 파일 읽기</button><button class="btn">선형 파일 저장</button><button class="btn">DXF 파일 읽기</button><button class="btn">평면 선형 계산서</button></div>
</div>
</div>
<div class="actions">
<button class="btn s def">기본값(<u>D</u>)</button><button class="btn s">IP 추가</button><button class="btn s">IP 삭제</button><button class="btn l">평면 형상 추가</button><button class="btn l">평면 형상 삭제</button><button class="btn l">중복 IP삭제</button>
<label class="ck"><input type="checkbox">전체 선형 표현</label>
<span class="nav"><button class="btn s">이전(<u>P</u>)</button><button class="btn s">다음(<u>N</u>)</button><button class="btn s">적용(<u>A</u>)</button></span>
</div>
</div>
</section>
<p class="status"><svg viewBox="0 0 16 16"><circle cx="8" cy="8" r="7" fill="#e8f4ff" stroke="#2458b0" stroke-width="1.500"/><path d="M8 3v2.500M8 7v6M6.500 7h2M6 12.500h4" stroke="#1a3f90" stroke-width="1.600"/></svg>해당 위치(BP,IP,EP)의 X좌표를 입력합니다. (단위 : m)</p>
</main>
</div>
</div>
</body>
</html>
```
FILE: styles.css
```css
* { box-sizing: border-box; }
html, body { height: 100%; margin: 0; }
body {
  font: 12px/17px "Noto Sans CJK KR", "Noto Sans", sans-serif;
  color: #22252a;
  background: #bfdbff;
}
button, input, select { font: inherit; color: inherit; }
button { border: 0; padding: 0; background: none; }
h1, h2, p, ul { margin: 0; padding: 0; }
.sprite { position: absolute; width: 0; height: 0; }

.app { height: 100vh; min-height: 640px; display: flex; flex-direction: column; overflow: hidden; }

.menu {
  height: 25px; flex: none;
  display: flex; align-items: center; gap: 14px;
  padding-left: 3px;
  border-top: 1px solid #4d5a6d;
  background: linear-gradient(90deg, #bfdbff, #dfeafd);
}
.menu .grip + button { margin-left: -7px; }
.menu button { white-space: nowrap; }

.grip {
  width: 3px; height: 14px; flex: none;
  background: repeating-linear-gradient(#8fa9d4 0 2px, transparent 2px 4px);
}

.bars {
  flex: none;
  display: flex; flex-direction: column; gap: 2px;
  background: linear-gradient(90deg, #c0dbff, #dfeafd);
  border-bottom: 2px solid #2f4b78;
}
.row { display: flex; gap: 2px; height: 23px; }
.bar {
  display: flex; align-items: center;
  padding-left: 3px;
  border-radius: 2px;
  background: linear-gradient(#e6f0ff, #d6e6fd 45%, #c0d9fc);
}
.bar .grip { margin-right: 1px; }
.bar button { width: 21px; height: 21px; flex: none; display: grid; place-items: center; }
.bar svg { width: 16px; height: 16px; }
.bar .on { background: #dfe2ee; border: 1px solid #8fa4cc; }
.bar .off { opacity: .5; }
.bar .g { background: #c6cdd6; background-clip: content-box; padding: 2px; }
.bar .r90 svg { rotate: 90deg; }
.bar .r180 svg { rotate: 180deg; }
.bar .r270 svg { rotate: 270deg; }
.bar .flip svg { scale: -1 1; }
.bar .more {
  width: 11px; height: 23px;
  place-items: end center; padding-bottom: 2px;
  background: linear-gradient(#a9c2ea, #6d8fc8);
}
.bar .more svg { width: 8px; height: 8px; }
.sep { width: 1px; height: 14px; margin: 0 2px 0 3px; flex: none; background: #8fadd8; }
.bar input, .bar select {
  height: 20px; border: 0; background: #fff; padding: 0 3px; outline: 0; border-radius: 0;
}
.num { width: 68px; }
.combo {
  width: 108px; margin-right: 1px;
  appearance: none;
}
.bar .combo {
  background: linear-gradient(#111, #111) 98px 9px / 5px 1px no-repeat,
    linear-gradient(#111, #111) 99px 10px / 3px 1px no-repeat,
    linear-gradient(#111, #111) 100px 11px / 1px 1px no-repeat,
    linear-gradient(90deg, #fff 95px, #dbe9fd 95px);
}

.work { flex: 1; min-height: 0; display: flex; gap: 5px; background: #8fb3e4; }

.side { width: 212px; flex: none; display: flex; flex-direction: column; border-right: 1px solid #587ab0; }
.side-head {
  height: 23px; flex: none;
  display: flex; align-items: center; gap: 6px; padding: 0 6px 0 4px;
  color: #16407e;
  background: linear-gradient(#dbe9ff, #a9cdf9);
  border-bottom: 1px solid #7597cc;
}
.side-head h2 { font-size: 15px; flex: 1; }
.side-head button, .dock-head button { width: 9px; height: 20px; display: grid; place-items: center; }
.side-head svg, .dock-head svg { width: 8px; height: 8px; }

.side-body { flex: 1; min-height: 0; display: flex; background: #fcfaff; }
.tree {
  flex: 1; list-style: none; padding: 1px 0 3px 5px;
  display: grid; grid-auto-rows: 1fr;
}
.tree li { display: flex; align-items: center; padding-left: 30px; white-space: nowrap; min-height: 0; }
.tree svg { width: 15px; height: 15px; margin-right: 3px; flex: none; }
.tree span { padding: 0 2px; line-height: 16px; }
.tree .top { padding-left: 0; font-weight: 700; }
.tree .box {
  width: 9px; height: 9px; margin: 0 6px 0 -3px; flex: none;
  border: 1px solid #8a8f98;
  background: linear-gradient(#223, #223) center / 5px 1px no-repeat #fff;
}
.tree .dis { color: #a3a3aa; }
.tree .sel span { background: #b9d6fb; }

.scroll { width: 15px; display: flex; flex-direction: column; align-items: center; background: #ececf0; padding: 7px 0; gap: 7px; }
.scroll .up, .scroll .down { border: 3px solid transparent; }
.scroll .up { border-bottom: 4px solid #444; border-top: 0; }
.scroll .down { border-top: 4px solid #444; border-bottom: 0; margin-top: auto; }
.thumb {
  width: 14px; flex: 0 0 87%; display: grid; place-items: center;
  border: 1px solid #989aa2; border-radius: 2px;
  background: linear-gradient(90deg, #fafafb, #cfd0d6);
}
.thumb i { width: 7px; height: 8px; background: repeating-linear-gradient(#555 0 1px, transparent 1px 3px); }

.split { height: 6px; flex: none; display: grid; place-items: center; background: linear-gradient(#9fc0ee, #6a93d2); }
.split i { width: 34px; height: 2px; background: repeating-linear-gradient(90deg, #1c3a70 0 2px, transparent 2px 4px); }
.side-foot {
  height: 26px; flex: none;
  display: flex; align-items: center; justify-content: flex-end;
  background: linear-gradient(#f2f7ff, #b4d2fa);
}
.side-foot button { width: 21px; height: 23px; display: grid; place-items: center; }
.side-foot svg { width: 16px; height: 16px; }
.side-foot .chev { width: 19px; }
.side-foot .chev svg { width: 8px; height: 14px; }
.side-foot .lit { background: #dbe6f8; }

.main { flex: 1; min-width: 0; display: flex; flex-direction: column; border-left: 1px solid #3c5f98; }
.view-head {
  height: 24px; flex: none; padding: 0 9px;
  font-size: 13px; line-height: 20px; font-weight: 400; color: #f4f4f4;
  background: #9c9c9b;
  border-top: 1px solid #e2e6ea; border-bottom: 2px solid #5d87c0;
}
.view { flex: 1; min-height: 0; background: #000; border-bottom: 2px solid #eef4ff; }
.view svg { width: 100%; height: 100%; display: block; }
.cad { font: 8px "Liberation Sans", sans-serif; fill: #d01018; }

.dock { flex: none; margin-top: 4px; border-top: 1px solid #fff; }
.dock-head {
  height: 24px;
  display: flex; align-items: center; gap: 6px; padding: 0 4px 0 5px;
  color: #1c3d6c;
  background: linear-gradient(#ffe0a2, #ffc477 50%, #ffa94c);
  border-bottom: 1px solid #7a95c4;
}
.dock-head h2 { font-size: 16px; line-height: 22px; flex: 1; }
.dock-body { background: #bfdbff; padding: 6px 5px 4px 6px; border-bottom: 1px solid #6382b8; }
.upper { display: flex; gap: 11px; }
.tabs { flex: 1; min-width: 0; display: flex; flex-direction: column; align-items: flex-start; }
.tab {
  height: 20px; width: 72px; margin-left: 1px; white-space: nowrap;
  font-family: "Open Sans", "Noto Sans", sans-serif;
  background: linear-gradient(#f6faff, #dfecfd);
  border: 1px solid #86a8da; border-bottom: 0; border-radius: 3px 3px 0 0;
}
.frame {
  flex: 1; align-self: stretch;
  padding: 4px 6px 7px 5px;
  background: linear-gradient(#dbe9fc, #e2f4ff);
  border: 1px solid #90afdc; border-radius: 3px;
}
.sheet { height: 100%; background: #628dc9; border: 1px solid #55759f; padding-right: 5px; }
table { width: 100%; border-collapse: collapse; table-layout: fixed; }
.c0 { width: 67px; }
th, td {
  height: 19px; padding: 0; text-align: center; font-weight: 400; line-height: 17px;
  font-family: "Noto Sans", "Noto Sans CJK KR", sans-serif;
  border: 1px solid #b4bfd0;
}
td { background: #fff; }
th { background: #bfdafd; border-color: #7f9fd0; }
.b { font-weight: 700; }
.na { background: #fff0c8; }
.cur { outline: 2px solid #222; outline-offset: -1px; }

.opts { width: 104px; flex: none; display: flex; flex-direction: column; }
.opts input {
  width: 100%; height: 17px; padding: 0 1px; border-radius: 0; outline: 0;
  border: 1px solid; border-color: #6b6f78 #fff #fff #6b6f78; background: #fff;
}
.opts label { line-height: 19px; white-space: nowrap; }
.opts input + label { margin-top: 3px; }
.inl { display: flex; gap: 3px; align-items: center; justify-content: space-between; margin-top: 5px; }
.inl input { width: 42px; }
.stack { display: flex; flex-direction: column; gap: 2px; margin-top: 16px; }
.btn {
  height: 21px; line-height: 18px; white-space: nowrap;
  border: 1px solid #7fa3da; border-radius: 2px;
  background: linear-gradient(#e3effe, #cfe2fc 45%, #b4d0f8 50%, #d5e7fe);
  box-shadow: inset 0 0 0 1px #e6f1ff;
}
.def { border-color: #d8c894; }
.actions { display: flex; align-items: center; gap: 3px; margin-top: 9px; }
.s { width: 57px; }
.l { width: 83px; }
.def, .nav .s { width: 60px; }
.ck { display: flex; align-items: center; gap: 4px; margin-left: 4px; white-space: nowrap; }
.ck input { appearance: none; width: 11px; height: 11px; margin: 0; border: 1px solid #a4b2c8; background: #e4e8ee; }
.nav { display: flex; gap: 3px; margin-left: auto; }
.nav .s:last-child { margin-left: 3px; }
.status {
  height: 19px; flex: none; margin-top: 2px;
  display: flex; align-items: center; gap: 3px; padding-left: 4px;
  background: #ffffe1; border-top: 1px solid #fff; overflow: hidden; white-space: nowrap;
}
.status svg { width: 16px; height: 16px; flex: none; }
```
